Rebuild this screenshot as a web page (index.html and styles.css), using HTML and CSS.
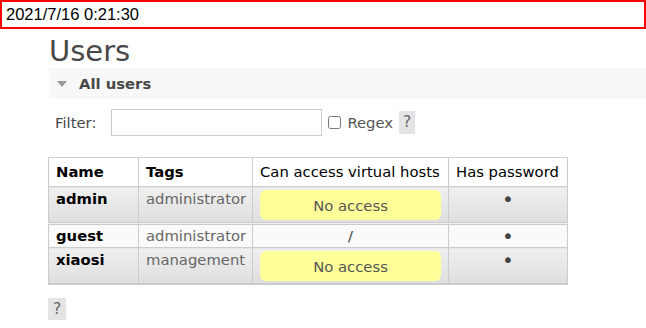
FILE: index.html
```html
<!DOCTYPE html>
<html>
<head>
  <title>Users</title>
  <link rel="stylesheet" href="styles.css">
</head>
<body>
  <div class="clock">2021/7/16 0:21:30</div>

  <div class="main">
    <h1>Users</h1>

    <div class="section">
      <h2><span class="arrow"></span>All users</h2>

      <div class="hider">
        <div class="filter">
          <label for="filter">Filter:</label>
          <input type="text" id="filter" class="filter-text">
          <label class="regex"><input type="checkbox" id="regex"> Regex</label>
          <span class="help">?</span>
        </div>

        <table class="list">
          <thead>
            <tr>
              <th class="col-name">Name</th>
              <th class="col-tags">Tags</th>
              <th class="col-vhosts plain">Can access virtual hosts</th>
              <th class="col-pass plain">Has password</th>
            </tr>
          </thead>
          <tbody>
            <tr class="alt1">
              <td class="name">admin</td>
              <td class="tags">administrator</td>
              <td class="vhosts"><div class="warning">No access</div></td>
              <td class="pass">&#8226;</td>
            </tr>
            <tr class="alt2">
              <td class="name">guest</td>
              <td class="tags">administrator</td>
              <td class="vhosts">/</td>
              <td class="pass">&#8226;</td>
            </tr>
            <tr class="alt1">
              <td class="name">xiaosi</td>
              <td class="tags">management</td>
              <td class="vhosts"><div class="warning">No access</div></td>
              <td class="pass">&#8226;</td>
            </tr>
          </tbody>
        </table>

        <div class="bottom-help"><span class="help">?</span></div>
      </div>
    </div>
  </div>
</body>
</html>
```

FILE: styles.css
```css
body {
    margin: 0;
    font-family: "DejaVu Sans", Verdana, sans-serif;
    font-size: 14.8px;
    color: #484848;
    background: #fff;
}

.clock {
    height: 25px;
    border: 2px solid #ff0000;
    padding-left: 4px;
    font-family: "Liberation Sans", Arial, sans-serif;
    font-size: 16.5px;
    line-height: 25px;
    color: #000;
}

.main {
    padding-left: 48px;
}

h1 {
    margin: 0;
    padding: 6px 0 0 1px;
    font-size: 29px;
    font-weight: normal;
    line-height: 32px;
    color: #484848;
}

.section h2 {
    margin: 1px 0 0 1px;
    height: 31px;
    display: flex;
    align-items: center;
    background-color: #f8f8f8;
    font-size: 14.8px;
    font-weight: bold;
    color: #484848;
}

.section h2 .arrow {
    width: 0;
    height: 0;
    margin: 1px 12px 0 8px;
    border-left: 5px solid transparent;
    border-right: 5px solid transparent;
    border-top: 6px solid #999;
}

.hider {
    padding-top: 10px;
}

.filter {
    display: flex;
    align-items: center;
    height: 27px;
    padding-left: 7px;
    color: #484848;
}

.filter label {
    margin-right: 15px;
}

.filter-text {
    width: 211px;
    height: 27px;
    margin: 0 6px 0 0;
    padding: 0 4px;
    border: 1px solid #ccc;
    box-sizing: border-box;
}

.filter .regex {
    display: flex;
    align-items: center;
    margin-right: 6px;
    color: #555;
}

.regex input {
    width: 13px;
    height: 13px;
    margin: 0 6px 0 0;
}

.help {
    display: inline-block;
    width: 16px;
    height: 23px;
    line-height: 23px;
    text-align: center;
    background-color: #e4e4e4;
    color: #666;
    font-size: 15.5px;
}

table.list {
    width: 519px;
    table-layout: fixed;
    margin-top: 21px;
    border-collapse: collapse;
    border: 1px solid #ccc;
    border-bottom-width: 2px;
}

.list th,
.list td {
    border: 1px solid #ccc;
    padding: 2px 7px;
    line-height: 18px;
    vertical-align: top;
    text-align: left;
    white-space: nowrap;
}

.list th {
    padding: 5px 7px;
    color: #000;
    background: #fff;
}

.list th.plain {
    font-weight: normal;
}

.col-name { width: 75px; }
.col-tags { width: 99px; }
.col-vhosts { width: 181px; }
.col-pass { width: 104px; }

.list tr.alt1 td {
    padding-top: 3px;
    background: linear-gradient(#f0f0f0, #dedede);
}

.list tr.alt2 td {
    background: #fafafa;
    border-top: 3px double #ccc;
}

.list td.name {
    font-weight: bold;
    color: #000;
}

.list td.tags {
    color: #666;
}

.list td.vhosts,
.list td.pass {
    text-align: center;
    color: #444;
}

.list td.pass {
    font-size: 20px;
}

.warning {
    height: 20px;
    padding: 5px 0;
    line-height: 22px;
    border-radius: 6px;
    background-color: #ffff99;
    color: #555;
    font-size: 14.8px;
}

.bottom-help {
    display: flex;
    margin-top: 13px;
}

.bottom-help .help {
    width: 18px;
    height: 22px;
    line-height: 22px;
}
```
